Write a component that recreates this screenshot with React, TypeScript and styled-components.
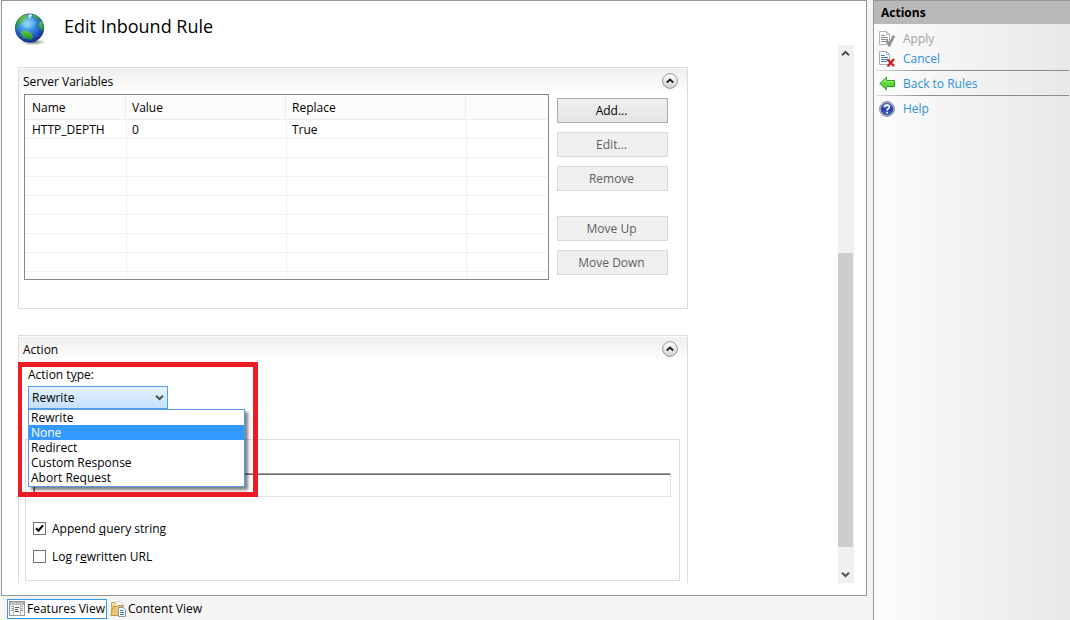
import React, { useState } from "react";
import styled, { createGlobalStyle, css } from "styled-components";

const GlobalStyle = createGlobalStyle`
  *, *::before, *::after { box-sizing: border-box; }
  body {
    margin: 0;
    background: #f5f5f5;
    color: #000;
    font: 12px/16px "Open Sans", "Noto Sans", sans-serif;
  }
  button, input, select { font: inherit; color: inherit; margin: 0; border-radius: 0; }
`;

const Shell = styled.div`
  display: grid;
  grid-template-columns: minmax(0, 1fr) 197px;
  height: 100vh;
`;

const Workspace = styled.div`
  display: flex;
  flex-direction: column;
  min-width: 0;
  min-height: 0;
  padding: 0 6px 0 1px;
`;

const Page = styled.main`
  flex: 1;
  min-height: 0;
  display: flex;
  flex-direction: column;
  background: #fff;
  border: 1px solid #96969a;
  padding: 0 12px 12px 16px;
`;

const PageHeader = styled.header`
  flex: none;
  display: flex;
  gap: 18px;
  height: 44px;
  margin-left: -4px;
  padding-top: 10px;
`;

const Title = styled.h1`
  margin: 0;
  padding-top: 3px;
  font-size: 18px;
  line-height: 24px;
  font-weight: 400;
`;

const ScrollArea = styled.div`
  flex: 1;
  min-height: 0;
  display: flex;
  justify-content: space-between;
  gap: 20px;
`;

const ScrollContent = styled.div`
  flex: 1;
  min-width: 0;
  max-width: 670px;
  overflow: hidden;
  padding-top: 22px;
`;

const ScrollBar = styled.div`
  flex: none;
  width: 16px;
  display: flex;
  flex-direction: column;
  background: #f0f0f0;
`;

const ScrollButton = styled.button`
  flex: none;
  display: flex;
  align-items: center;
  justify-content: center;
  height: 17px;
  padding: 0 1px 0 0;
  border: 0;
  background: none;
`;

const ScrollGap = styled.div<{ $share: number }>`
  flex: ${(p) => p.$share} 0 0;
`;

const ScrollThumb = styled(ScrollGap)`
  margin-right: 1px;
  background: #cdcdcd;
`;

const Panel = styled.section`
  border: 1px solid #dcdcdc;
  margin-bottom: 26px;
`;

const PanelHeader = styled.div`
  display: flex;
  align-items: center;
  justify-content: space-between;
  height: 26px;
  padding: 0 9px 0 4px;
  border: solid #fff;
  border-width: 1px 0 0;
  background: linear-gradient(#efefef, #fff);
`;

const PanelTitle = styled.h2`
  margin: 0;
  font-size: 12px;
  line-height: 16px;
  font-weight: 400;
`;

const CollapseButton = styled.button`
  display: flex;
  padding: 0 0 2px;
  border: 0;
  background: none;
`;

const VariablesBody = styled.div`
  display: flex;
  gap: 8px;
  padding: 0 19px 28px 5px;
`;

const TableFrame = styled.div`
  flex: 1;
  min-width: 0;
  height: 186px;
  overflow: hidden;
  padding: 1px 1px 1px 0;
  border: 1px solid #828790;
`;

const Table = styled.table`
  width: 100%;
  table-layout: fixed;
  border-collapse: separate;
  border-spacing: 0;
`;

const cell = css`
  text-align: left;
  font-weight: 400;
  white-space: nowrap;
`;

const HeadCell = styled.th`
  ${cell}
  height: 24px;
  padding: 0 6px;
  background: #fcfcfc;
  border-right: 1px solid #e3eef7;
  border-bottom: 1px solid #e3eef7;
  &:first-child { padding-left: 7px; }
  &:last-child { border-right: 0; }
`;

const Cell = styled.td`
  ${cell}
  height: 19px;
  padding: 2px 6px 0 5px;
  border-left: 1px solid #f0f0f0;
  border-bottom: 1px solid #f0f0f0;
  &:first-child { padding-left: 7px; border-left: 0; }
`;

const ButtonColumn = styled.div`
  flex: none;
  width: 111px;
  display: flex;
  flex-direction: column;
  gap: 9px;
  padding-top: 4px;
`;

const PushButton = styled.button<{ $newGroup?: boolean }>`
  height: 25px;
  margin-top: ${(p) => (p.$newGroup ? 16 : 0)}px;
  padding: 0 2px 0 0;
  border: 1px solid #acacac;
  background: linear-gradient(#f0f0f0, #e5e5e5);
  &:disabled {
    border-color: #d9d9d9;
    background: #efefef;
    color: #5f5f5f;
  }
`;

const ActionField = styled.div`
  position: relative;
  display: flex;
  flex-direction: column;
  align-items: flex-start;
  gap: 3px;
  padding: 5px 9px 0;
`;

const ComboBox = styled.div`
  position: relative;
  width: 140px;
  height: 23px;
  color: #000;
  & > svg { position: absolute; right: 4px; top: 8px; pointer-events: none; }
`;

const Select = styled.select`
  appearance: none;
  width: 100%;
  height: 100%;
  padding: 0 20px 0 3px;
  border: 1px solid #569de5;
  background: linear-gradient(#e6f1fc, #c4e0fb);
`;

const Options = styled.ul`
  position: absolute;
  z-index: 2;
  top: 100%;
  left: 0;
  width: 217px;
  margin: 0;
  padding: 0 0 1px;
  list-style: none;
  background: #fff;
  border: 1px solid #569de5;
  box-shadow: 3px 3px 3px rgba(0, 0, 0, 0.5);
`;

const Option = styled.li<{ $active: boolean }>`
  height: 15px;
  padding-left: 2px;
  line-height: 15px;
  color: ${(p) => (p.$active ? "#fff" : "#000")};
  background: ${(p) => (p.$active ? "#3399ff" : "transparent")};
`;

const Highlight = styled.div`
  position: absolute;
  z-index: 3;
  top: 0;
  left: -2px;
  width: 241px;
  height: 135px;
  border: 5px solid #ed1c24;
  pointer-events: none;
`;

const ActionPanel = styled(Panel)`
  width: 100%;
`;

const PropertiesGroup = styled.div`
  display: flex;
  flex-direction: column;
  margin: 30px 7px 20px 6px;
  padding: 33px 8px 15px 7px;
  border: 1px solid #dcdcdc;
`;

const UrlInput = styled.input`
  width: 100%;
  height: 24px;
  margin-bottom: 24px;
  padding: 0 4px;
  border: 1px solid #e3e3e3;
  border-top-color: #a0a0a0;
  border-left-color: #a0a0a0;
  box-shadow: inset 1px 1px #696969;
  outline: 0;
`;

const CheckLabel = styled.label`
  display: flex;
  align-items: center;
  gap: 6px;
  & + & { margin-top: 12px; }
`;

const CheckBox = styled.input`
  appearance: none;
  width: 13px;
  height: 13px;
  margin-bottom: 1px;
  border: 1px solid #707070;
  background: #fff center / 11px 11px no-repeat;
  &:checked {
    background-image: url("data:image/svg+xml,%3Csvg xmlns='http://www.w3.org/2000/svg' viewBox='0 0 11 11'%3E%3Cpath d='M2 5.3L4.4 7.8L9 2.4' fill='none' stroke='%23000' stroke-width='2.1'/%3E%3C/svg%3E");
  }
`;

const ViewTabs = styled.nav`
  flex: none;
  display: flex;
  gap: 1px;
  height: 24px;
  padding: 3px 0 1px 6px;
`;

const ViewTab = styled.button<{ $active?: boolean }>`
  display: flex;
  align-items: center;
  gap: 2px;
  height: 20px;
  padding: 0 1px;
  white-space: nowrap;
  border: 1px solid ${(p) => (p.$active ? "#3399ff" : "transparent")};
  background: ${(p) => (p.$active ? "#fff" : "transparent")};
`;

const ActionsPane = styled.aside`
  border: solid #96969a;
  border-width: 1px 0 0 1px;
  background: linear-gradient(90deg, #fcfcfc, #e8e8e8);
`;

const ActionsTitle = styled.h2`
  margin: 0;
  height: 23px;
  padding-left: 7px;
  font-size: 12px;
  line-height: 23px;
  font-weight: 700;
  background: #bab8ba;
`;

const ActionList = styled.ul`
  margin: 0;
  padding: 5px 1px 0 2px;
  list-style: none;
`;

const ActionItem = styled.li<{ $ruled?: boolean }>`
  padding: 2px 0 2px 3px;
  ${(p) =>
    p.$ruled &&
    css`
      margin-top: 1px;
      padding-top: 5px;
      border-top: 1px solid;
      border-image: linear-gradient(90deg, #e0e0e0, #8c8c8c 25%) 1;
    `}
`;

const ActionLink = styled.a<{ $disabled?: boolean }>`
  display: flex;
  align-items: center;
  gap: 8px;
  height: 16px;
  text-decoration: none;
  color: ${(p) => (p.$disabled ? "#a3a0a3" : "#2f8fd8")};
`;

const Chevron = ({ up = false }: { up?: boolean }) => (
  <svg width="9" height="7" viewBox="0 0 9 7" aria-hidden="true">
    <path
      d={up ? "M1 5.2L4.5 1.9L8 5.2" : "M1 1.8L4.5 5.1L8 1.8"}
      fill="none"
      stroke="#505050"
      strokeWidth="2"
    />
  </svg>
);

const CollapseIcon = () => (
  <svg width="16" height="16" viewBox="0 0 16 16" aria-hidden="true">
    <defs>
      <linearGradient id="knob" x1="0" y1="0" x2="0" y2="1">
        <stop offset="0" stopColor="#fff" />
        <stop offset="1" stopColor="#d2d2d2" />
      </linearGradient>
    </defs>
    <circle cx="8" cy="8" r="7.4" fill="url(#knob)" stroke="#999" />
    <path d="M4.8 9.4L8 6.5L11.2 9.4" fill="none" stroke="#222" strokeWidth="2" />
  </svg>
);

const GlobeIcon = () => (
  <svg width="32" height="36" viewBox="0 0 32 36" aria-hidden="true">
    <defs>
      <radialGradient id="sea" cx="0.42" cy="0.36" r="0.66">
        <stop offset="0" stopColor="#86d6f4" />
        <stop offset="0.35" stopColor="#3f9fe2" />
        <stop offset="0.72" stopColor="#2156c0" />
        <stop offset="1" stopColor="#142c86" />
      </radialGradient>
      <linearGradient id="land" x1="0" y1="0" x2="0" y2="1">
        <stop offset="0" stopColor="#6cc943" />
        <stop offset="1" stopColor="#178f38" />
      </linearGradient>
      <radialGradient id="shade">
        <stop offset="0" stopColor="#444" stopOpacity="0.9" />
        <stop offset="1" stopColor="#888" stopOpacity="0" />
      </radialGradient>
      <clipPath id="disc"><circle cx="15.5" cy="17" r="14.5" /></clipPath>
    </defs>
    <ellipse cx="19" cy="31" rx="13" ry="3.4" fill="url(#shade)" />
    <circle cx="15.5" cy="17" r="14.5" fill="url(#sea)" />
    <g clipPath="url(#disc)" fill="url(#land)">
      <path d="M2 13C4 7 7 4 12 3L14 5L12 6L12.5 8L10 9L7.5 12L5 12.5L3.5 15L2 19L0 17Z" />
      <path d="M19 3C22 3 25 5 27 9L25.5 9.5L23 7L20.5 7L18.5 5Z" />
      <path d="M26 10L28.5 11L30 15L29.5 19L27.5 19.5L25.5 17L25 13Z" />
      <path d="M7 21C9 19 13 19.5 15 21L17.5 22.5L19 26L17.5 28.5L13.5 28L10 27.5L7.5 24.5Z" />
    </g>
    <path d="M14.5 3H18V5.5H16.5V7H14.5Z" fill="#e9fbff" opacity="0.8" />
    <ellipse cx="14" cy="11.5" rx="8" ry="5" fill="#fff" opacity="0.15" />
    <circle cx="15.5" cy="17" r="14" fill="none" stroke="#173a7c" opacity="0.35" />
  </svg>
);

const Sheet = ({ ink, edge }: { ink: string; edge: string }) => (
  <>
    <path d="M0.5 0.5H7.5L10.5 3.5V13.5H0.5Z" fill="#fff" stroke={edge} />
    <path d="M7.5 0.5V3.5H10.5" fill="none" stroke={edge} />
    <path d="M2 4.5H6M2 6.5H9M2 8.5H9M2 10.5H8" stroke={ink} />
  </>
);

const ApplyIcon = () => (
  <svg width="16" height="16" viewBox="0 0 16 16" aria-hidden="true">
    <Sheet ink="#8a8a8a" edge="#b4b4b4" />
    <path d="M7.5 9.5L10.3 14L15 4.5" fill="none" stroke="#8f8f8f" strokeWidth="2.6" />
  </svg>
);

const CancelIcon = () => (
  <svg width="16" height="16" viewBox="0 0 16 16" aria-hidden="true">
    <Sheet ink="#3f78b5" edge="#a9adb3" />
    <path d="M8.5 8.5L15 15M15 8L8.5 15.5" stroke="#d8161b" strokeWidth="2.2" />
  </svg>
);

const BackIcon = () => (
  <svg width="16" height="16" viewBox="0 0 16 16" aria-hidden="true">
    <path d="M0.8 7.5L7.5 1.2V4.5H15.5V10.5H7.5V13.8Z" fill="#5fd63a" stroke="#2d9a22" />
    <path d="M2.8 7.3L6.8 3.6V5.6H14.5" fill="none" stroke="#a8f08a" />
  </svg>
);

const HelpIcon = () => (
  <svg width="16" height="16" viewBox="0 0 16 16" aria-hidden="true">
    <defs>
      <linearGradient id="help" x1="0" y1="0" x2="0" y2="1">
        <stop offset="0" stopColor="#6f8edc" />
        <stop offset="0.5" stopColor="#1f3fa8" />
        <stop offset="1" stopColor="#3867cf" />
      </linearGradient>
    </defs>
    <circle cx="8" cy="8" r="7.4" fill="#d0d0d4" stroke="#85858a" />
    <circle cx="8" cy="8" r="5.9" fill="url(#help)" stroke="#2b449c" strokeWidth="0.8" />
    <path
      d="M5.6 6.4C5.7 3.4 10.4 3.5 10.3 6.1C10.2 7.6 8 7.7 8 9.6"
      fill="none"
      stroke="#fff"
      strokeWidth="1.7"
    />
    <rect x="7.1" y="10.8" width="1.8" height="1.7" fill="#fff" />
  </svg>
);

const FeaturesIcon = () => (
  <svg width="16" height="16" viewBox="0 0 16 16" aria-hidden="true">
    <rect x="0.5" y="0.5" width="15" height="14" fill="#fafafa" stroke="#9a9a9a" />
    <path d="M1 2.5H15" stroke="#b2b2b2" strokeWidth="3" />
    <path d="M2 2.5H14" stroke="#e6e6e6" strokeDasharray="1 1" />
    <path d="M4.5 4V14M11.5 4V14" stroke="#b5b5b5" />
    <path d="M2 5.5H4M2 7.5H4M2 9.5H4M12 5.5H14M12 7.5H14M12 9.5H14" stroke="#9a9a9a" />
    <path d="M6 6.5H10M6 8.5H9M6 10.5H10" stroke="#555" />
  </svg>
);

const ContentIcon = () => (
  <svg width="16" height="16" viewBox="0 0 16 16" aria-hidden="true">
    <path d="M1.5 14V1.5H6L7 3H12.5V12Z" fill="#f5dd94" stroke="#cfa75a" />
    <path d="M6 0.8H10.5L12.5 2.8V7H6Z" fill="#fdfdfd" stroke="#c9c9c9" strokeWidth="0.8" />
    <path d="M0.8 14.5L3 5.5H7L8 4.5H13.5L11 14.5Z" fill="#ecc873" stroke="#c4964a" />
    <path d="M8.5 6.5H13L15.5 9V15.5H8.5Z" fill="#fff" stroke="#8794a3" />
    <path d="M10 9.5H13M10 11.5H14M10 13.5H14" stroke="#3f78b5" />
  </svg>
);

const VARIABLES = [{ name: "HTTP_DEPTH", value: "0", replace: "True" }];
const EMPTY_ROWS = [1, 2, 3, 4, 5, 6, 7, 8];
const ACTION_TYPES = ["Rewrite", "None", "Redirect", "Custom Response", "Abort Request"];

function ServerVariables() {
  return (
    <Panel>
      <PanelHeader>
        <PanelTitle>Server Variables</PanelTitle>
        <CollapseButton type="button" aria-label="Collapse Server Variables">
          <CollapseIcon />
        </CollapseButton>
      </PanelHeader>
      <VariablesBody>
        <TableFrame>
          <Table>
            <colgroup>
              <col width="101" />
              <col width="160" />
              <col width="180" />
              <col />
            </colgroup>
            <thead>
              <tr>
                <HeadCell>Name</HeadCell>
                <HeadCell>Value</HeadCell>
                <HeadCell>Replace</HeadCell>
                <HeadCell />
              </tr>
            </thead>
            <tbody>
              {VARIABLES.map((v) => (
                <tr key={v.name}>
                  <Cell>{v.name}</Cell>
                  <Cell>{v.value}</Cell>
                  <Cell>{v.replace}</Cell>
                  <Cell />
                </tr>
              ))}
              {EMPTY_ROWS.map((n) => (
                <tr key={n}>
                  <Cell />
                  <Cell />
                  <Cell />
                  <Cell />
                </tr>
              ))}
            </tbody>
          </Table>
        </TableFrame>
        <ButtonColumn>
          <PushButton type="button">Add...</PushButton>
          <PushButton type="button" disabled>Edit...</PushButton>
          <PushButton type="button" disabled>Remove</PushButton>
          <PushButton type="button" disabled $newGroup>Move Up</PushButton>
          <PushButton type="button" disabled>Move Down</PushButton>
        </ButtonColumn>
      </VariablesBody>
    </Panel>
  );
}

function ActionSettings() {
  const [type, setType] = useState("Rewrite");
  const [hovered, setHovered] = useState("None");
  const [append, setAppend] = useState(true);
  const [log, setLog] = useState(false);
  return (
    <ActionPanel>
      <PanelHeader>
        <PanelTitle>Action</PanelTitle>
        <CollapseButton type="button" aria-label="Collapse Action">
          <CollapseIcon />
        </CollapseButton>
      </PanelHeader>
      <ActionField>
        <label htmlFor="action-type">Action t<u>y</u>pe:</label>
        <ComboBox>
          <Select id="action-type" value={type} onChange={(e) => setType(e.target.value)}>
            {ACTION_TYPES.map((t) => (
              <option key={t}>{t}</option>
            ))}
          </Select>
          <Chevron />
          <Options role="listbox" aria-label="Action type">
            {ACTION_TYPES.map((t) => (
              <Option
                key={t}
                role="option"
                aria-selected={t === type}
                $active={t === hovered}
                onMouseEnter={() => setHovered(t)}
                onClick={() => setType(t)}
              >
                {t}
              </Option>
            ))}
          </Options>
        </ComboBox>
        <Highlight />
      </ActionField>
      <PropertiesGroup>
        <UrlInput type="text" aria-label="Rewrite URL" />
        <CheckLabel>
          <CheckBox type="checkbox" checked={append} onChange={() => setAppend(!append)} />
          <span>Append <u>q</u>uery string</span>
        </CheckLabel>
        <CheckLabel>
          <CheckBox type="checkbox" checked={log} onChange={() => setLog(!log)} />
          <span>Log r<u>e</u>written URL</span>
        </CheckLabel>
      </PropertiesGroup>
    </ActionPanel>
  );
}

export default function App() {
  return (
    <>
      <GlobalStyle />
      <Shell>
        <Workspace>
          <Page>
            <PageHeader>
              <GlobeIcon />
              <Title>Edit Inbound Rule</Title>
            </PageHeader>
            <ScrollArea>
              <ScrollContent>
                <ServerVariables />
                <ActionSettings />
              </ScrollContent>
              <ScrollBar>
                <ScrollButton type="button" aria-label="Scroll up"><Chevron up /></ScrollButton>
                <ScrollGap $share={191} />
                <ScrollThumb $share={294} />
                <ScrollGap $share={19} />
                <ScrollButton type="button" aria-label="Scroll down"><Chevron /></ScrollButton>
              </ScrollBar>
            </ScrollArea>
          </Page>
          <ViewTabs>
            <ViewTab type="button" $active><FeaturesIcon />Features View</ViewTab>
            <ViewTab type="button"><ContentIcon />Content View</ViewTab>
          </ViewTabs>
        </Workspace>
        <ActionsPane>
          <ActionsTitle>Actions</ActionsTitle>
          <ActionList>
            <ActionItem><ActionLink $disabled aria-disabled="true" href="#apply"><ApplyIcon />Apply</ActionLink></ActionItem>
            <ActionItem><ActionLink href="#cancel"><CancelIcon />Cancel</ActionLink></ActionItem>
            <ActionItem $ruled><ActionLink href="#rules"><BackIcon />Back to Rules</ActionLink></ActionItem>
            <ActionItem $ruled><ActionLink href="#help"><HelpIcon />Help</ActionLink></ActionItem>
          </ActionList>
        </ActionsPane>
      </Shell>
    </>
  );
}
